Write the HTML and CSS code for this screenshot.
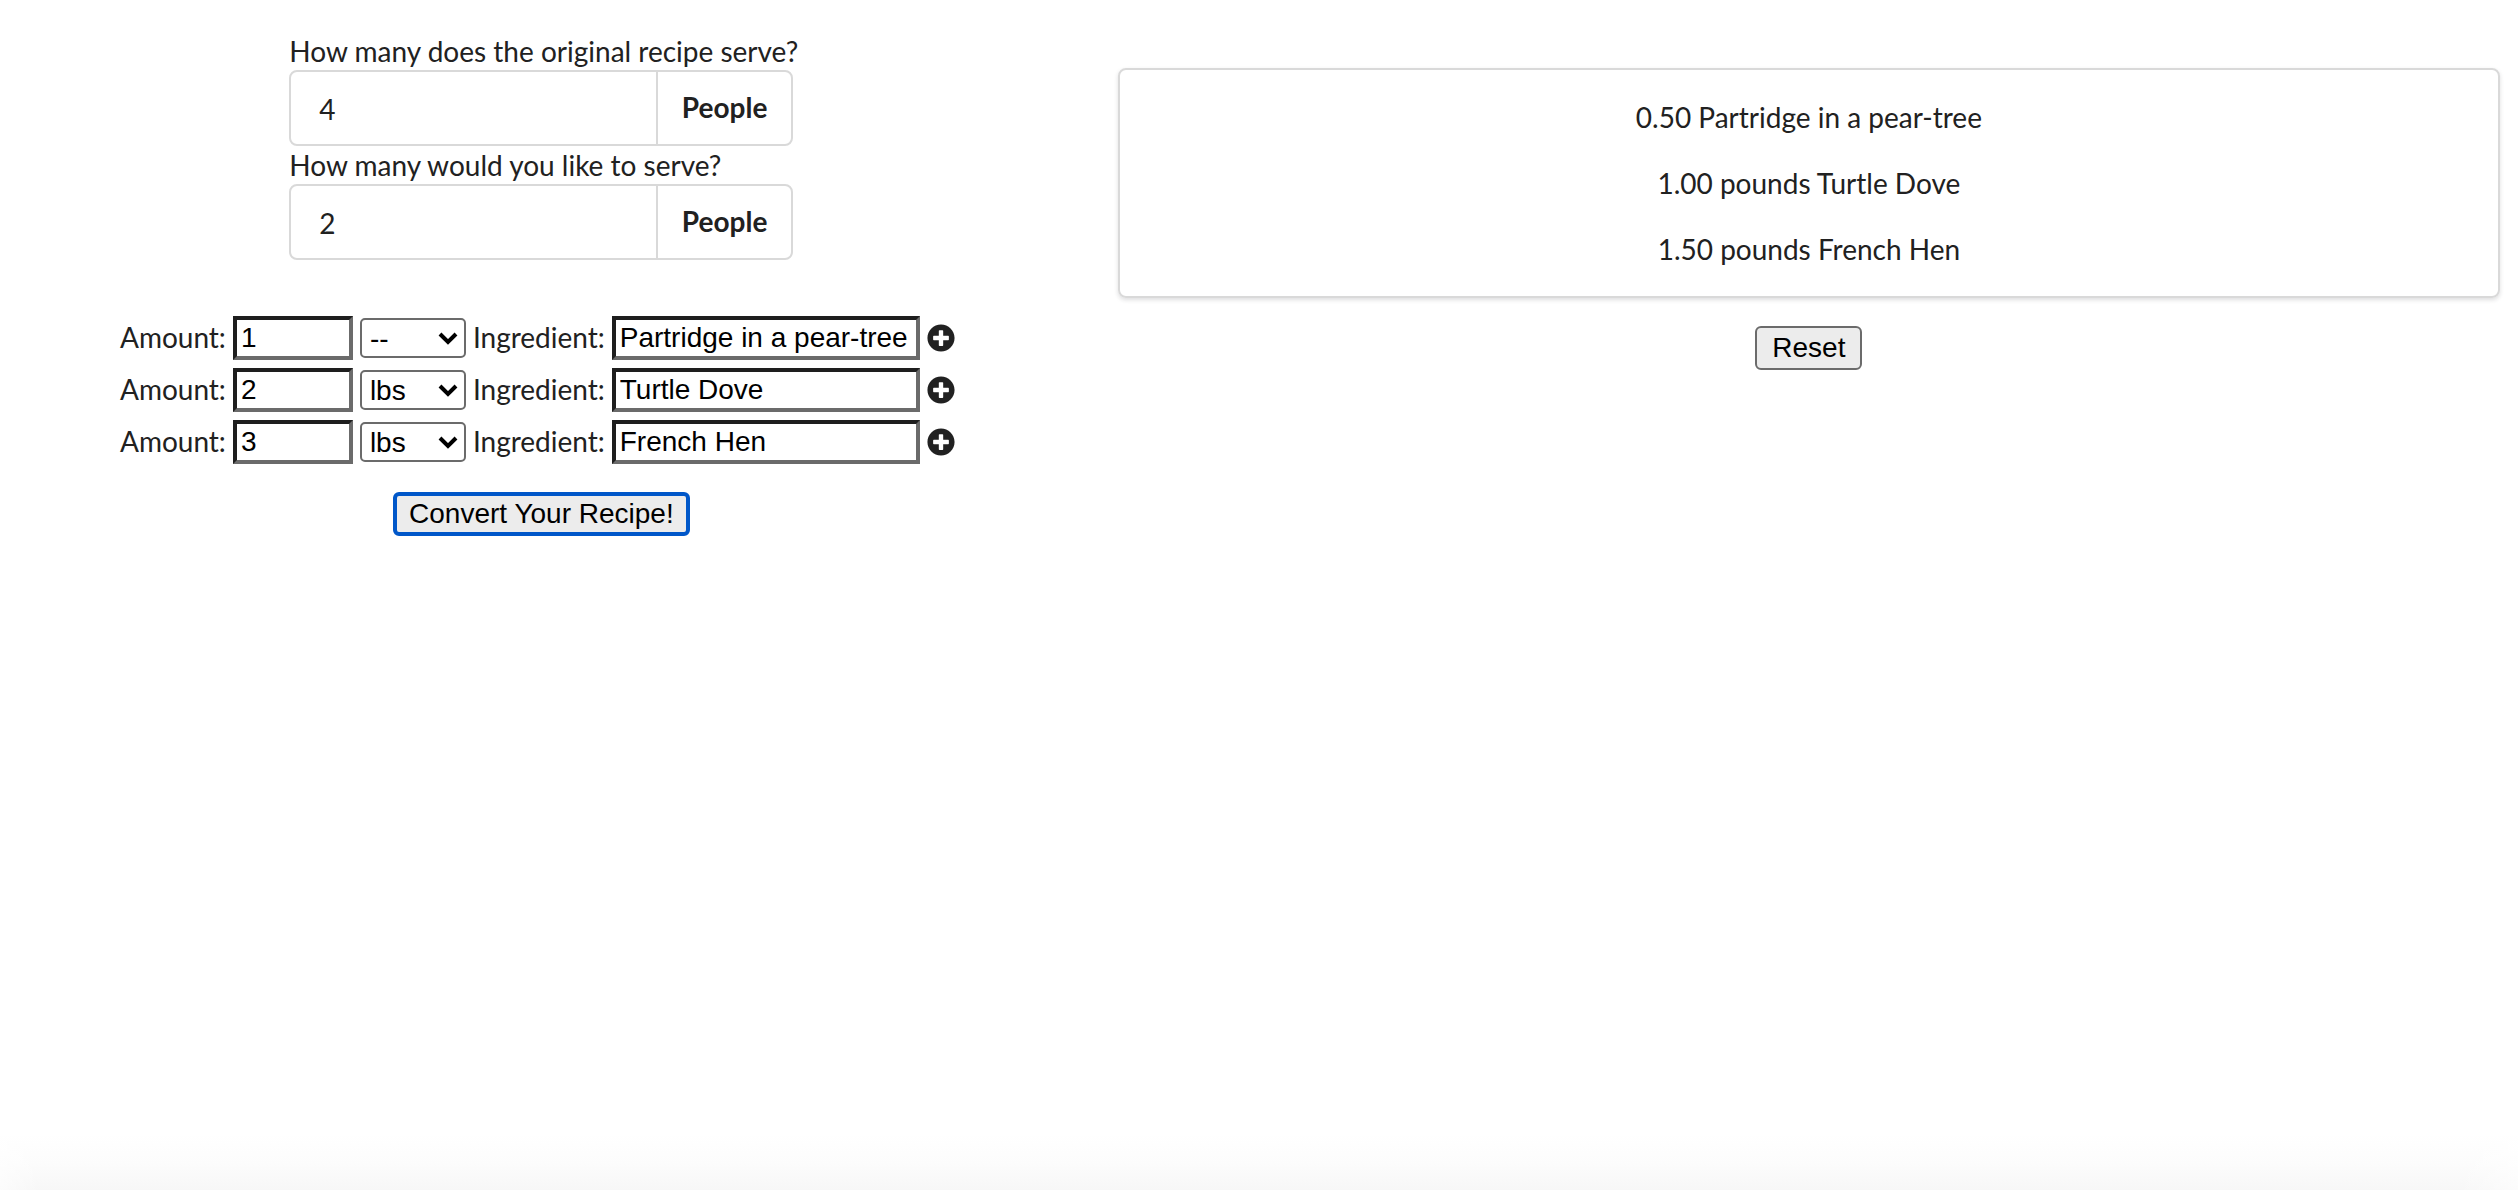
FILE: index.html
```html
<!DOCTYPE html>
<html lang="en">
<head>
<meta charset="utf-8">
<meta name="viewport" content="width=device-width, initial-scale=1">
<title>Recipe Converter</title>
<link rel="stylesheet" href="styles.css">
</head>
<body>
<svg class="sprite" aria-hidden="true">
  <symbol id="plus-circle" viewBox="0 0 512 512">
    <path d="M256 8C119 8 8 119 8 256s111 248 248 248 248-111 248-248S393 8 256 8zm144 276c0 6.600-5.400 12-12 12h-92v92c0 6.600-5.400 12-12 12h-56c-6.600 0-12-5.400-12-12v-92h-92c-6.600 0-12-5.400-12-12v-56c0-6.600 5.400-12 12-12h92v-92c0-6.600 5.400-12 12-12h56c6.600 0 12 5.400 12 12v92h92c6.600 0 12 5.400 12 12v56z"/>
  </symbol>
  <symbol id="chevron" viewBox="0 0 20 14">
    <path d="M2 3l8 8 8-8" fill="none" stroke="#000" stroke-width="4"/>
  </symbol>
</svg>
<main class="page">
  <form class="recipe">
    <div class="servings">
      <label class="question" for="original">How many does the original recipe serve?</label>
      <div class="field">
        <input class="field-input" id="original" type="text" value="4">
        <span class="field-unit">People</span>
      </div>
      <label class="question" for="desired">How many would you like to serve?</label>
      <div class="field">
        <input class="field-input" id="desired" type="text" value="2">
        <span class="field-unit">People</span>
      </div>
    </div>
    <div class="ingredients">
      <div class="row">
        <label class="row-label" for="amount1">Amount:</label>
        <input class="box amount" id="amount1" type="text" value="1">
        <span class="picker">
          <select class="unit" aria-label="Unit"><option>--</option><option>lbs</option></select>
          <svg class="chevron" aria-hidden="true"><use href="#chevron"/></svg>
        </span>
        <label class="row-label" for="name1">Ingredient:</label>
        <input class="box name" id="name1" type="text" value="Partridge in a pear-tree">
        <button class="add" type="button" aria-label="Add ingredient"><svg class="icon"><use href="#plus-circle"/></svg></button>
      </div>
      <div class="row">
        <label class="row-label" for="amount2">Amount:</label>
        <input class="box amount" id="amount2" type="text" value="2">
        <span class="picker">
          <select class="unit" aria-label="Unit"><option>--</option><option selected>lbs</option></select>
          <svg class="chevron" aria-hidden="true"><use href="#chevron"/></svg>
        </span>
        <label class="row-label" for="name2">Ingredient:</label>
        <input class="box name" id="name2" type="text" value="Turtle Dove">
        <button class="add" type="button" aria-label="Add ingredient"><svg class="icon"><use href="#plus-circle"/></svg></button>
      </div>
      <div class="row">
        <label class="row-label" for="amount3">Amount:</label>
        <input class="box amount" id="amount3" type="text" value="3">
        <span class="picker">
          <select class="unit" aria-label="Unit"><option>--</option><option selected>lbs</option></select>
          <svg class="chevron" aria-hidden="true"><use href="#chevron"/></svg>
        </span>
        <label class="row-label" for="name3">Ingredient:</label>
        <input class="box name" id="name3" type="text" value="French Hen">
        <button class="add" type="button" aria-label="Add ingredient"><svg class="icon"><use href="#plus-circle"/></svg></button>
      </div>
    </div>
    <button class="button convert" type="button">Convert Your Recipe!</button>
  </form>
  <section class="result">
    <div class="card">
      <p>0.50 Partridge in a pear-tree</p>
      <p>1.00 pounds Turtle Dove</p>
      <p>1.50 pounds French Hen</p>
    </div>
    <button class="button" type="button">Reset</button>
  </section>
</main>
</body>
</html>
```
FILE: styles.css
```css
* {
  box-sizing: border-box;
}

body {
  margin: 0;
  min-height: 100vh;
  background:
    linear-gradient(to right, rgba(255, 255, 255, 0.6), transparent 40px),
    linear-gradient(to left, rgba(255, 255, 255, 0.6), transparent 60px),
    linear-gradient(to top, #f7f7f7, #fcfcfc 26px, #fff 56px);
  color: #212121;
  font-family: Lato, sans-serif;
  font-size: 28px;
  line-height: 36px;
}

.sprite {
  position: absolute;
  width: 0;
  height: 0;
}

.page {
  display: flex;
  align-items: flex-start;
}

.recipe {
  flex: 0 0 43%;
  display: flex;
  flex-direction: column;
  align-items: center;
  padding-top: 32px;
}

.servings {
  width: 504px;
}

.question {
  display: block;
  height: 38px;
  line-height: 38px;
  white-space: nowrap;
}

.field {
  display: flex;
  height: 76px;
  border: 2px solid #d9d9d9;
  border-radius: 8px;
}

.field-input {
  flex: 1;
  min-width: 0;
  padding: 2px 28px 0;
  border: 0;
  background: transparent;
  color: inherit;
  font: inherit;
  outline: none;
}

.field-unit {
  display: flex;
  align-items: center;
  padding: 0 24px 2px;
  border-left: 2px solid #d9d9d9;
  font-weight: bold;
}

.ingredients {
  display: flex;
  flex-direction: column;
  gap: 8px;
  margin: 56px 8px 28px 0;
}

.row {
  display: flex;
  align-items: center;
  gap: 7px;
  height: 44px;
}

.row-label {
  padding-bottom: 2px;
}

.box {
  height: 44px;
  padding: 2px 4px;
  border: 4px solid;
  border-color: #1e1e1e #6b6b6b #6b6b6b #1e1e1e;
  background: #fff;
  color: #000;
  font: 28px "Liberation Sans", Arial, sans-serif;
  outline: none;
}

.amount {
  width: 120px;
}

.name {
  width: 308px;
}

.picker {
  position: relative;
  width: 106px;
  height: 40px;
}

.unit {
  appearance: none;
  width: 100%;
  height: 100%;
  padding: 0 8px;
  border: 2px solid #6b6b6b;
  border-radius: 5px;
  background: #fff;
  color: #000;
  font: 28px "Liberation Sans", Arial, sans-serif;
}

.chevron {
  position: absolute;
  top: 13px;
  right: 8px;
  width: 20px;
  height: 14px;
  pointer-events: none;
}

.add {
  display: flex;
  padding: 0;
  border: 0;
  background: none;
  color: inherit;
}

.icon {
  width: 28px;
  height: 28px;
  fill: currentColor;
}

.button {
  height: 44px;
  padding: 0 15px;
  border: 2px solid #6b6b6b;
  border-radius: 6px;
  background: #ececec;
  color: #000;
  font: 28px "Liberation Sans", Arial, sans-serif;
}

.convert {
  padding: 0 12px;
  border: 4px solid #0057c9;
}

.result {
  flex: 1;
  display: flex;
  flex-direction: column;
  align-items: center;
  gap: 28px;
  padding: 68px 18px 0 35px;
}

.card {
  display: flex;
  flex-direction: column;
  gap: 30px;
  width: 100%;
  padding: 29px 28px;
  border: 2px solid #d9d9d9;
  border-radius: 8px;
  box-shadow: 0 2px 4px rgba(34, 36, 38, 0.15);
  text-align: center;
}

.card p {
  margin: 0;
}
```
